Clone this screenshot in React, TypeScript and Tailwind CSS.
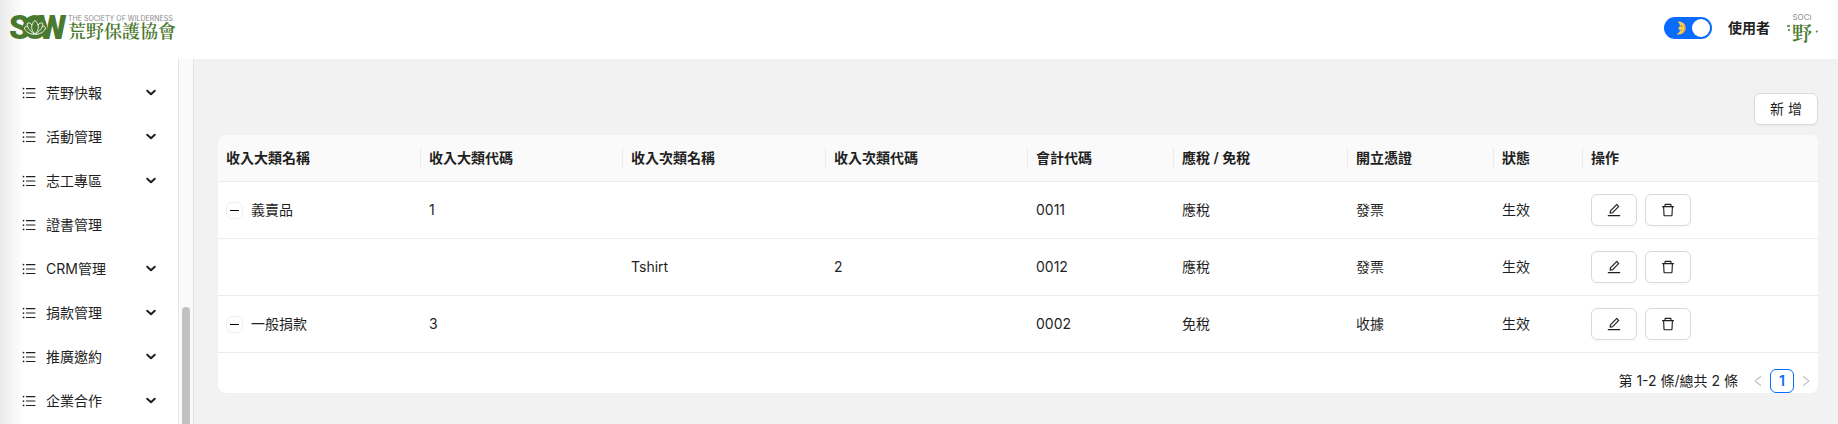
import { useState } from "react";
import {
  AiOutlineDelete,
  AiOutlineEdit,
  AiOutlineLeft,
  AiOutlineRight,
  AiOutlineUnorderedList,
} from "react-icons/ai";

const menuItems = [
  { label: "荒野快報", children: true },
  { label: "活動管理", children: true },
  { label: "志工專區", children: true },
  { label: "證書管理", children: false },
  { label: "CRM管理", children: true },
  { label: "捐款管理", children: true },
  { label: "推廣邀約", children: true },
  { label: "企業合作", children: true },
];

const columns = [
  { title: "收入大類名稱", width: "w-[203px]" },
  { title: "收入大類代碼", width: "w-[202px]" },
  { title: "收入次類名稱", width: "w-[203px]" },
  { title: "收入次類代碼", width: "w-[202px]" },
  { title: "會計代碼", width: "w-[146px]" },
  { title: "應稅 / 免稅", width: "w-[174px]" },
  { title: "開立憑證", width: "w-[146px]" },
  { title: "狀態", width: "w-[89px]" },
  { title: "操作", width: "w-[235px]" },
];

const rows = [
  { id: 1, name: "義賣品", code: "1", subName: "", subCode: "", account: "0011", tax: "應稅", receipt: "發票", status: "生效", parent: 0 },
  { id: 2, name: "", code: "", subName: "Tshirt", subCode: "2", account: "0012", tax: "應稅", receipt: "發票", status: "生效", parent: 1 },
  { id: 3, name: "一般捐款", code: "3", subName: "", subCode: "", account: "0002", tax: "免稅", receipt: "收據", status: "生效", parent: 0 },
];

function Logo() {
  return (
    <svg className="h-[27px] w-[170px] overflow-visible" viewBox="0 0 170 27" role="img" aria-label="荒野保護協會">
      <g fill="#4a7a2f" className="font-['Roboto']" fontSize="33" fontWeight="900">
        <text x="0" y="25">S</text>
        <text x="29" y="25">W</text>
      </g>
      <circle cx="26" cy="13" r="12" fill="#4a7a2f" />
      <g fill="none" stroke="#f1f6ed" strokeWidth="1">
        <path d="M26 20c-3-3-4-6-3-9 .6-2 1.800-3.500 3-4.500 1.200 1 2.400 2.500 3 4.500 1 3 0 6-3 9z" />
        <path d="M23 11c-1.500-2-3.500-2.500-4.500-1.800-1 2.500 1 7 7 10.800" />
        <path d="M29 11c1.500-2 3.500-2.500 4.500-1.800 1 2.500-1 7-7 10.800" />
        <path d="M18.500 12c-2 .1-3 1-3 2 1 3.500 4.500 6 10 6.500M33.500 12c2 .1 3 1 3 2-1 3.500-4.500 6-10 6.500" />
      </g>
      <text x="59" y="7" fill="#8b8b8b" fontSize="7" className="font-['Inter']">
        THE SOCIETY OF WILDERNESS
      </text>
      <text x="59" y="24" fill="#4a7a2f" fontSize="18" fontWeight="600" className="font-['Noto_Serif_CJK_TC','Noto_Sans_CJK_TC',serif]">
        荒野保護協會
      </text>
    </svg>
  );
}

// the user has no photo, so the middle of the logo stands in
function Avatar() {
  return (
    <svg className="h-8 w-8 rounded-full" viewBox="0 0 32 32" role="img" aria-label="使用者頭像">
      <text x="16" y="8" textAnchor="middle" fill="#8b8b8b" fontSize="8" className="font-['Inter']">
        SOCI
      </text>
      <text x="16" y="29" textAnchor="middle" fill="#4a7a2f" fontSize="20" fontWeight="600" className="font-['Noto_Serif_CJK_TC','Noto_Sans_CJK_TC',serif]">
        野
      </text>
      <path d="M1 14h3M3 17v2M30 20l2-1" stroke="#4a7a2f" strokeWidth="1.500" />
    </svg>
  );
}

function Moon() {
  return (
    <svg className="h-3.5 w-3" viewBox="0 0 12 14" aria-hidden="true">
      <path d="M3.500.500C8 .5 10.500 3.500 10.500 7S8 13.500 3 13.500C1.800 13.500 1.500 13 2.500 12.500 4 11.800 4.800 10.800 5 9.500L4 8.800 4.400 8 3 7.200 4.800 5.500C5 3.500 4.500 2 3 1.200 2.400.8 2.800.5 3.500.5z" fill="#f9cf55" />
      <path d="M8 1.800C9.800 3.200 10.500 5 10.500 7c0 3.200-2.200 6-6 6.400C7.500 12 9 9.800 9 7c0-2-.3-3.600-1-5.200z" fill="#e9a93a" />
      <circle cx="6.300" cy="5" r=".7" fill="#6b4a1c" />
      <path d="M5.200 9.500c.8.100 1.400-.1 1.800-.6" fill="none" stroke="#8a5d20" strokeWidth=".6" />
    </svg>
  );
}

function ChevronDown() {
  return (
    <svg className="h-3 w-3" viewBox="0 0 12 12" fill="none" stroke="currentColor" strokeWidth="2" strokeLinecap="round" strokeLinejoin="round" aria-hidden="true">
      <path d="M2.200 3.700 6 7.300l3.800-3.600" />
    </svg>
  );
}

const buttonClass =
  "flex h-8 items-center justify-center rounded-md border border-[#d9d9d9] bg-white shadow-[0_2px_0_rgba(0,0,0,0.02)]";

export default function App() {
  const [dark, setDark] = useState(true);
  const [closed, setClosed] = useState<number[]>([]);

  function toggleRow(id: number) {
    setClosed(closed.includes(id) ? closed.filter((item) => item !== id) : [...closed, id]);
  }

  return (
    <div className="relative flex h-screen flex-col overflow-hidden bg-[#f2f2f2] font-['Inter','Noto_Sans_CJK_TC',sans-serif] text-sm leading-[22px] text-[#1f1f1f]">
      <header className="flex h-[59px] shrink-0 items-center justify-between bg-white pr-5 pb-1 pl-[9px]">
        <a href="#home">
          <Logo />
        </a>
        <div className="flex items-center gap-4">
          <label className="flex h-[22px] w-12 cursor-pointer items-center justify-between rounded-full bg-[#0a6cff] pr-0.5 pl-[11px]">
            <input
              type="checkbox"
              role="switch"
              aria-label="深色模式"
              className="sr-only"
              checked={dark}
              onChange={(e) => setDark(e.target.checked)}
            />
            <Moon />
            <span className="h-[18px] w-[18px] rounded-full bg-white" />
          </label>
          <span className="font-semibold">使用者</span>
          <Avatar />
        </div>
      </header>

      <div className="flex min-h-0 flex-1">
        <aside className="flex w-[194px] shrink-0 bg-white">
          <nav className="min-w-0 flex-1 overflow-hidden pt-3.5">
            <ul className="flex flex-col gap-1">
              {menuItems.map((item) => (
                <li key={item.label}>
                  <button type="button" className="flex h-10 w-full items-center gap-[9px] pr-[21px] pl-[21px] text-left">
                    <AiOutlineUnorderedList className="h-4 w-4" />
                    <span className="flex-1">{item.label}</span>
                    {item.children && <ChevronDown />}
                  </button>
                </li>
              ))}
            </ul>
          </nav>
          <div className="flex w-4 flex-col justify-end border-x border-[#e4e4e4] bg-[#fafafa] px-[3px]">
            <div className="h-[32%] rounded-t-full bg-[#c1c1c1]" />
          </div>
        </aside>

        <main className="min-w-0 flex-1 pt-[34px] pr-5 pl-6">
          <div className="mb-2.5 flex justify-end">
            <button type="button" className={`${buttonClass} px-[15px]`}>新 增</button>
          </div>

          <div className="overflow-hidden rounded-lg bg-white">
            <table className="w-full table-fixed border-separate border-spacing-0 text-left">
              <thead>
                <tr className="bg-[#fafafa]">
                  {columns.map((column, index) => (
                    <th key={column.title} className={`${column.width} border-b border-[#ececec] py-3 pl-2 font-semibold`}>
                      <div className={index < columns.length - 1 ? "border-r border-[#ececec]" : ""}>
                        {column.title}
                      </div>
                    </th>
                  ))}
                </tr>
              </thead>
              <tbody className="[&_td]:h-[57px] [&_td]:border-b [&_td]:border-[#ececec] [&_td]:px-2">
                {rows
                  .filter((row) => !closed.includes(row.parent))
                  .map((row) => (
                    <tr key={row.id}>
                      <td>
                        {row.name && (
                          <div className="flex items-center gap-2">
                            <button
                              type="button"
                              aria-label="展開"
                              onClick={() => toggleRow(row.id)}
                              className="flex h-[17px] w-[17px] items-center justify-center rounded-md border border-[#f0f0f0] bg-white"
                            >
                              <span className="h-px w-[9px] bg-black" />
                            </button>
                            {row.name}
                          </div>
                        )}
                      </td>
                      <td>{row.code}</td>
                      <td>{row.subName}</td>
                      <td>{row.subCode}</td>
                      <td>{row.account}</td>
                      <td>{row.tax}</td>
                      <td>{row.receipt}</td>
                      <td>{row.status}</td>
                      <td>
                        <div className="flex gap-2">
                          <button type="button" aria-label="編輯" className={`${buttonClass} px-3.5`}>
                            <AiOutlineEdit className="h-4 w-4" />
                          </button>
                          <button type="button" aria-label="刪除" className={`${buttonClass} px-3.5`}>
                            <AiOutlineDelete className="h-4 w-4" />
                          </button>
                        </div>
                      </td>
                    </tr>
                  ))}
              </tbody>
            </table>

            <div className="mt-4 flex h-6 items-center justify-end">
              <span className="mr-2">第 1-2 條/總共 2 條</span>
              <button type="button" aria-label="上一頁" disabled className="flex h-6 w-6 items-center justify-center text-[#bfbfbf]">
                <AiOutlineLeft className="h-3.5 w-3.5" />
              </button>
              <button type="button" className="flex h-6 w-6 items-center justify-center rounded-md border border-[#0a6cff] bg-white font-semibold text-[#0a6cff]">
                1
              </button>
              <button type="button" aria-label="下一頁" disabled className="flex h-6 w-6 items-center justify-center text-[#bfbfbf]">
                <AiOutlineRight className="h-3.5 w-3.5" />
              </button>
            </div>
          </div>
        </main>
      </div>

      {/* soft shade along the left edge */}
      <div className="pointer-events-none absolute inset-y-0 left-0 w-6 bg-linear-to-r from-black/8 to-transparent" />
    </div>
  );
}
